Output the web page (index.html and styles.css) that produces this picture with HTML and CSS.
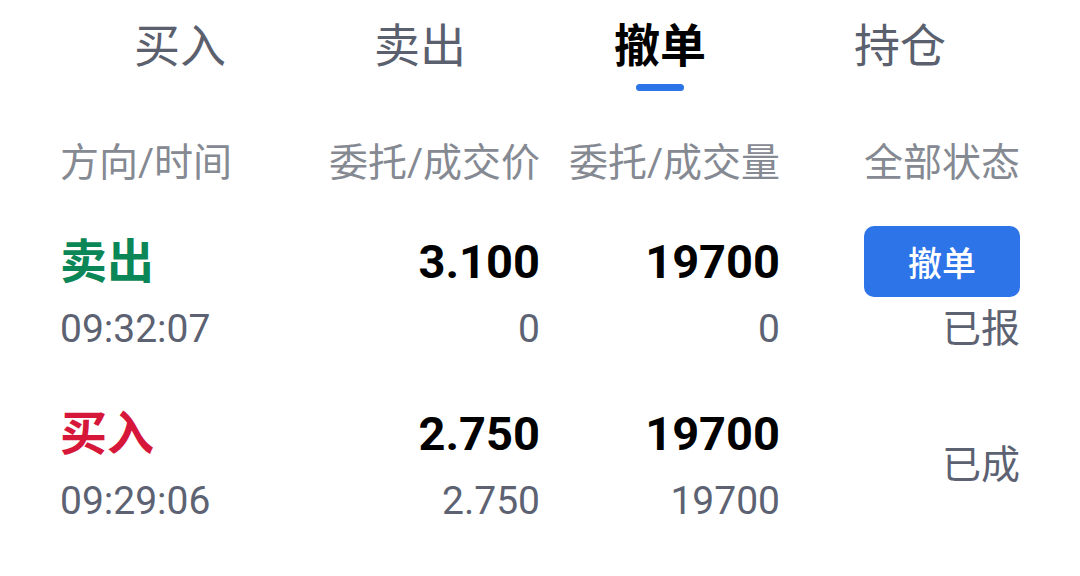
FILE: index.html
```html
<!DOCTYPE html>
<html lang="zh-CN">
<head>
  <meta charset="UTF-8" />
  <title>撤单</title>
  <meta name="viewport" content="width=device-width, initial-scale=1.0" />
  <link rel="stylesheet" href="styles.css">
</head>
<body>

<!-- Tabs -->
<div class="tabs">
  <div class="tab">买入</div>
  <div class="tab">卖出</div>
  <div class="tab active">撤单<span class="bar"></span></div>
  <div class="tab">持仓</div>
</div>

<!-- Header -->
<div class="head">
  <div class="c1">方向/时间</div>
  <div class="c2">委托/成交价</div>
  <div class="c3">委托/成交量</div>
  <div class="c4">全部状态</div>
</div>

<!-- Orders -->
<div class="row">
  <div class="c1">
    <div class="big sell">卖出</div>
    <div class="small">09:32:07</div>
  </div>
  <div class="c2">
    <div class="big">3.100</div>
    <div class="small">0</div>
  </div>
  <div class="c3">
    <div class="big">19700</div>
    <div class="small">0</div>
  </div>
  <div class="c4 status">
    <button class="cancel">撤单</button>
    <div class="small">已报</div>
  </div>
</div>

<div class="row">
  <div class="c1">
    <div class="big buy">买入</div>
    <div class="small">09:29:06</div>
  </div>
  <div class="c2">
    <div class="big">2.750</div>
    <div class="small">2.750</div>
  </div>
  <div class="c3">
    <div class="big">19700</div>
    <div class="small">19700</div>
  </div>
  <div class="c4 status center">
    <div class="small">已成</div>
  </div>
</div>

</body>
</html>
```

FILE: styles.css
```css
body {
  margin: 0; background: #fff;
  font-family: Roboto, "Noto Sans CJK SC", sans-serif;
  color: #111;
}

.tabs { display: flex; padding: 22px 60px 0; }
.tab {
  flex: 1; text-align: center;
  font-size: 46px; line-height: 48px;
  color: #5b606e;
  display: flex; flex-direction: column; align-items: center;
}
.tab.active { color: #000; font-weight: bold; }
.tab .bar {
  display: block; width: 48px; height: 7px;
  margin-top: 14px; border-radius: 4px;
  background: #2d74e9;
}

.head, .row {
  display: grid; grid-template-columns: repeat(4, 1fr);
  padding: 0 60px;
}
.head {
  margin-top: 47px;
  font-size: 39px; line-height: 50px; color: #858992;
}
.row { margin-top: 38px; }

.c2, .c3, .c4 { text-align: right; }

.big {
  font-size: 47px; line-height: 72px;
  font-weight: bold; color: #000;
}
.big.sell { color: #0b8656; }
.big.buy { color: #d6173a; }
.small {
  font-size: 39px; line-height: 62px;
  color: #5c6272;
}

.status {
  display: flex; flex-direction: column;
  align-items: flex-end;
}
.status.center { justify-content: center; }

.cancel {
  width: 156px; height: 71px; margin: 0 0 1px;
  border: none; border-radius: 10px;
  background: #2d74e9; color: #fff;
  font-family: Roboto, "Noto Sans CJK SC", sans-serif;
  font-size: 34px; font-weight: 500;
}
```
